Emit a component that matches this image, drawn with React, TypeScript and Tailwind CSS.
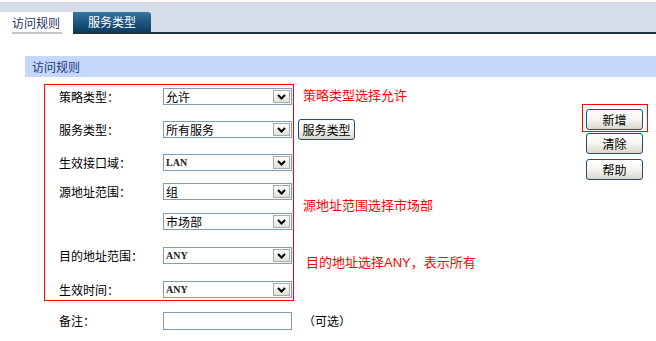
const cjk = "font-['Noto_Sans_CJK_SC','Noto_Sans',sans-serif]";

const Chevron = () => (
  <svg width="9" height="6" viewBox="0 0 9 6">
    <path d="M1 1 L4.5 4.5 L8 1" fill="none" stroke="#000" strokeWidth="2" />
  </svg>
);

const Select = ({ value, latin = false }: { value: string; latin?: boolean }) => (
  <div className="flex h-[17px] w-[129px] items-center border border-[#7f9db9] bg-white">
    <span
      className={
        latin
          ? "pl-[2px] font-['Liberation_Serif',serif] text-[10px] leading-none font-bold text-[#1a1a1a]"
          : "pl-[2px] text-[12px] leading-none"
      }
    >
      {value}
    </span>
    <div className="mr-px ml-auto flex h-[13px] w-[17px] items-center justify-center border border-[#a9a9a9] bg-linear-to-b from-white to-[#e3e1d8]">
      <Chevron />
    </div>
  </div>
);

const Button = ({ label, className = "" }: { label: string; className?: string }) => (
  <button
    className={`flex h-[21px] w-[57px] items-center justify-center rounded-[3px] border border-[#1f4f7a] bg-linear-to-b from-white via-[#f5f4ef] to-[#d9d6cc] text-[12px] leading-none text-black ${className}`}
  >
    {label}
  </button>
);

const Row = ({
  label,
  value,
  latin,
  className = "",
}: {
  label: string;
  value: string;
  latin?: boolean;
  className?: string;
}) => (
  <div className={`flex items-center ${className}`}>
    <span className="w-[118px] pl-[14px] text-[12px] leading-none">{label}</span>
    <Select value={value} latin={latin} />
  </div>
);

export default function App() {
  return (
    <div className={`h-[341px] w-[656px] overflow-hidden bg-white text-black ${cjk}`}>
      {/* tabs */}
      <div className="mt-[2px] flex h-[32px] items-end border-b-2 border-[#1a3644] bg-[#d6dde8]">
        <div className="-mb-[2px] flex h-[22px] w-[73px] flex-col justify-end bg-white pl-[12px]">
          <span className="w-[50px] border-b-2 border-[#c3c6ca] pb-px text-[12px] leading-[16px] text-[#1f2f66]">
            访问规则
          </span>
        </div>
        <div className="flex h-[20px] w-[78px] items-center justify-center rounded-tr-[3px] bg-linear-to-b from-[#3a77a0] via-[#1c5683] to-[#0f3d60] text-[12px] leading-none text-white">
          服务类型
        </div>
      </div>

      {/* section header */}
      <div className="mt-[22px] ml-[25px] h-[21px] bg-[#c3d8fb] pl-[7px] text-[12px] leading-[21px] text-[#1d3a7b]">
        访问规则
      </div>

      <div className="mt-[7px] flex">
        {/* highlighted fields */}
        <div className="ml-[44px] flex h-[217px] w-[250px] flex-col border border-[#ff0000]">
          <Row label="策略类型：" value="允许" className="mt-[3px]" />
          <Row label="服务类型：" value="所有服务" className="mt-[16px]" />
          <Row label="生效接口域：" value="LAN" latin className="mt-[16px]" />
          <Row label="源地址范围：" value="组" className="mt-[12px]" />
          <Row label="" value="市场部" className="mt-[13px]" />
          <Row label="目的地址范围：" value="ANY" latin className="mt-[17px]" />
          <Row label="生效时间：" value="ANY" latin className="mt-[17px]" />
        </div>

        {/* notes */}
        <div className="ml-[4px] flex flex-col items-start text-[13px] leading-[16px] text-[#ff0000]">
          <span className="mt-[3px] pl-[5px]">策略类型选择允许</span>
          <Button label="服务类型" className="mt-[16px] h-[20px]" />
          <span className="mt-[57px] pl-[5px]">源地址范围选择市场部</span>
          <span className="mt-[41px] pl-[8px]">
            目的地址选择<span className="font-['Liberation_Sans',sans-serif]">ANY</span>，表示所有
          </span>
        </div>

        {/* actions */}
        <div className="mt-[20px] mr-[8px] ml-auto flex flex-col items-start">
          <div className="border border-[#ff0000] pt-[4px] pr-[4px] pb-px pl-[3px]">
            <Button label="新增" />
          </div>
          <Button label="清除" className="mt-px ml-[4px]" />
          <Button label="帮助" className="mt-[5px] ml-[4px]" />
        </div>
      </div>

      {/* remark */}
      <div className="mt-[11px] flex items-center">
        <span className="w-[163px] pl-[59px] text-[12px] leading-none">备注：</span>
        <div className="h-[18px] w-[129px] border border-[#7f9db9] bg-white" />
        <span className="ml-[11px] text-[12px] leading-none">（可选）</span>
      </div>
    </div>
  );
}
